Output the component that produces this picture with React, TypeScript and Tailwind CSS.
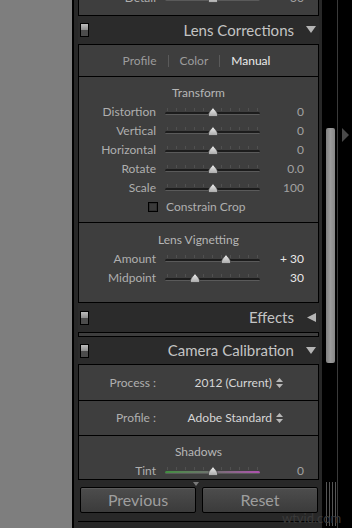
import React from 'react';

const Toggle = () => (
  <div className="w-[9px] h-[14px] border border-black flex flex-col shrink-0">
    <div className="h-1/2 bg-gradient-to-b from-[#bdbdbd] to-[#8c8c8c]" />
    <div className="h-1/2 bg-[#4c4c4c]" />
  </div>
);

const TriDown = () => (
  <svg width="10" height="8" viewBox="0 0 10 8" className="shrink-0">
    <polygon points="0,0 10,0 5,7" fill="#b4b4b4" />
  </svg>
);

const TriLeft = () => (
  <svg width="10" height="9" viewBox="0 0 10 9" className="shrink-0">
    <polygon points="10,0 10,9 1,4.5" fill="#b4b4b4" />
  </svg>
);

const Header = ({ title, open, h }: { title: string; open: boolean; h: string }) => (
  <div className={`${h} flex items-center bg-[#2b2b2b] pl-[2px] pr-[3px]`}>
    <Toggle />
    <span className="ml-auto text-[15px] text-[#c4c4c4] leading-none">{title}</span>
    <div className="ml-[12px]">{open ? <TriDown /> : <TriLeft />}</div>
  </div>
);

const Slider = ({ pos, tint }: { pos: number; tint?: boolean }) => (
  <div className="relative w-[95px] h-[19px] ml-[9px] shrink-0">
    <div className="absolute left-[2px] right-[2px] top-[6px] h-[3px] bg-[repeating-linear-gradient(90deg,#505050_0px,#505050_1px,transparent_1px,transparent_9px)]" />
    <div
      className={`absolute left-0 right-0 top-[10px] h-[3px] rounded-full border-b border-[#5a5a5a] ${
        tint ? 'bg-gradient-to-r from-[#3f8f3f] via-[#6f6f6f] to-[#b04fb0]' : 'bg-[#1c1c1c]'
      }`}
    />
    <svg
      width="10"
      height="10"
      viewBox="0 0 10 10"
      className="absolute top-[5px]"
      style={{ left: pos * 95 - 5 }}
    >
      <defs>
        <linearGradient id="th" x1="0" y1="0" x2="0" y2="1">
          <stop offset="0" stopColor="#f2f2f2" />
          <stop offset="1" stopColor="#a8a8a8" />
        </linearGradient>
      </defs>
      <path d="M5 0.5 C6 2.5 9.5 5 9.5 7.5 L9.5 9.5 L0.5 9.5 L0.5 7.5 C0.5 5 4 2.5 5 0.5 Z" fill="url(#th)" stroke="#2a2a2a" strokeWidth="0.6" />
    </svg>
  </div>
);

const Row = ({
  label,
  value,
  pos = 0.5,
  bright,
  tint,
}: {
  label: string;
  value: string;
  pos?: number;
  bright?: boolean;
  tint?: boolean;
}) => (
  <div className="h-[19px] flex items-center">
    <div className="w-[77px] text-right text-[12px] text-[#afafaf] leading-none">{label}</div>
    <Slider pos={pos} tint={tint} />
    <div
      className={`w-[44px] text-right text-[12px] leading-none ${bright ? 'text-[#e8e8e8]' : 'text-[#a2a2a2]'}`}
    >
      {value}
    </div>
  </div>
);

const Heading = ({ children }: { children: React.ReactNode }) => (
  <div className="h-[19px] flex items-center justify-center text-[12px] text-[#b6b6b6] leading-none">
    {children}
  </div>
);

const UpDown = () => (
  <svg width="7" height="10" viewBox="0 0 7 10" className="ml-[4px] shrink-0">
    <polygon points="3.5,0 7,4 0,4" fill="#b8b8b8" />
    <polygon points="0,6 7,6 3.5,10" fill="#b8b8b8" />
  </svg>
);

const Btn = ({ children }: { children: React.ReactNode }) => (
  <div className="w-[116px] h-[26px] border border-black rounded-[2px] bg-gradient-to-b from-[#4d4d4d] to-[#3b3b3b] shadow-[inset_0_1px_0_#5a5a5a] flex items-center justify-center text-[16px] text-[#9e9e9e] leading-none">
    {children}
  </div>
);

export default function App() {
  return (
    <div className="relative w-[352px] h-[528px] overflow-hidden flex bg-black font-['Lato',sans-serif]">
      {/* left preview area */}
      <div className="w-[72px] bg-[#7e7e7e]" />
      <div className="w-[2px] bg-black" />

      {/* right panel column */}
      <div className="w-[248px] bg-[#282828] pl-[4px] pr-[3px] flex flex-col">
        {/* Detail (scrolled off) */}
        <div className="h-[16px] overflow-hidden border-x border-b border-black bg-[#3e3e3e]">
          <div className="mt-[-12px]">
            <Row label="Detail" value="30" />
          </div>
        </div>

        <Header title="Lens Corrections" open h="h-[28px]" />

        <div className="border border-black bg-[#3e3e3e]">
          <div className="h-[31px] flex items-center justify-center gap-[11px] pr-[4px] text-[12px] leading-none">
            <span className="text-[#9c9c9c]">Profile</span>
            <span className="w-px h-[12px] bg-[#5a5a5a]" />
            <span className="text-[#9c9c9c]">Color</span>
            <span className="w-px h-[12px] bg-[#5a5a5a]" />
            <span className="text-[#ececec]">Manual</span>
          </div>
          <div className="h-px bg-black" />
          <div className="pt-[6px] pb-[6px]">
            <Heading>Transform</Heading>
            <Row label="Distortion" value="0" />
            <Row label="Vertical" value="0" />
            <Row label="Horizontal" value="0" />
            <Row label="Rotate" value="0.0" />
            <Row label="Scale" value="100" />
            <div className="h-[19px] flex items-center pl-[69px]">
              <div className="w-[10px] h-[10px] border border-black bg-[#3a3a3a] shadow-[inset_0_0_0_1px_#2e2e2e]" />
              <span className="ml-[8px] text-[12px] text-[#afafaf] leading-none">Constrain Crop</span>
            </div>
          </div>
          <div className="h-px bg-black" />
          <div className="pt-[7px] pb-[15px]">
            <Heading>Lens Vignetting</Heading>
            <Row label="Amount" value="+ 30" pos={0.64} bright />
            <Row label="Midpoint" value="30" pos={0.32} bright />
          </div>
        </div>

        <Header title="Effects" open={false} h="h-[29px]" />
        <div className="h-[5px] border border-black bg-[#3e3e3e]" />

        <Header title="Camera Calibration" open h="h-[27px]" />

        <div className="border border-black bg-[#3e3e3e]">
          <div className="h-[35px] flex items-center">
            <div className="w-[77px] text-right text-[12px] text-[#afafaf] leading-none">Process :</div>
            <div className="flex-1 flex items-center justify-end pr-[35px] text-[12px] text-[#d6d6d6] leading-none">
              2012 (Current)
              <UpDown />
            </div>
          </div>
          <div className="h-px bg-black" />
          <div className="h-[34px] flex items-center">
            <div className="w-[77px] text-right text-[12px] text-[#afafaf] leading-none">Profile :</div>
            <div className="flex-1 flex items-center justify-end pr-[35px] text-[12px] text-[#d6d6d6] leading-none">
              Adobe Standard
              <UpDown />
            </div>
          </div>
          <div className="h-px bg-black" />
          <div className="h-[43px] overflow-hidden pt-[6px]">
            <Heading>Shadows</Heading>
            <Row label="Tint" value="0" tint />
          </div>
        </div>

        <div className="h-[7px] flex justify-center pr-[6px] pt-[2px]">
          <svg width="6" height="4" viewBox="0 0 6 4">
            <polygon points="0,0 6,0 3,4" fill="#7a7a7a" />
          </svg>
        </div>

        <div className="flex gap-[6px] pl-[2px]">
          <Btn>Previous</Btn>
          <Btn>Reset</Btn>
        </div>
        <div className="h-[8px]" />
        <div className="h-px bg-black" />
      </div>

      {/* scrollbar */}
      <div className="w-[15px] bg-black flex flex-col">
        <div className="mt-[128px] ml-[4px] w-[9px] h-[235px] rounded-[2px] bg-gradient-to-r from-[#7e7e7e] via-[#9a9a9a] to-[#868686]" />
        <div className="mt-auto mb-[2px] ml-[4px] w-[10px] h-[44px] bg-[repeating-linear-gradient(90deg,#555_0px,#555_1px,transparent_1px,transparent_3px)]" />
      </div>
      <div className="w-px bg-[#3a3a3a]" />
      <div className="w-[14px] bg-black pl-[4px] pt-[128px]">
        <svg width="7" height="14" viewBox="0 0 7 14">
          <polygon points="0,0 7,7 0,14" fill="#4a4a4a" />
        </svg>
      </div>

      {/* watermark */}
      <div className="absolute left-[282px] top-[512px] text-[13px] text-[#3a3a3a] leading-none">wtvid.com</div>
    </div>
  );
}
